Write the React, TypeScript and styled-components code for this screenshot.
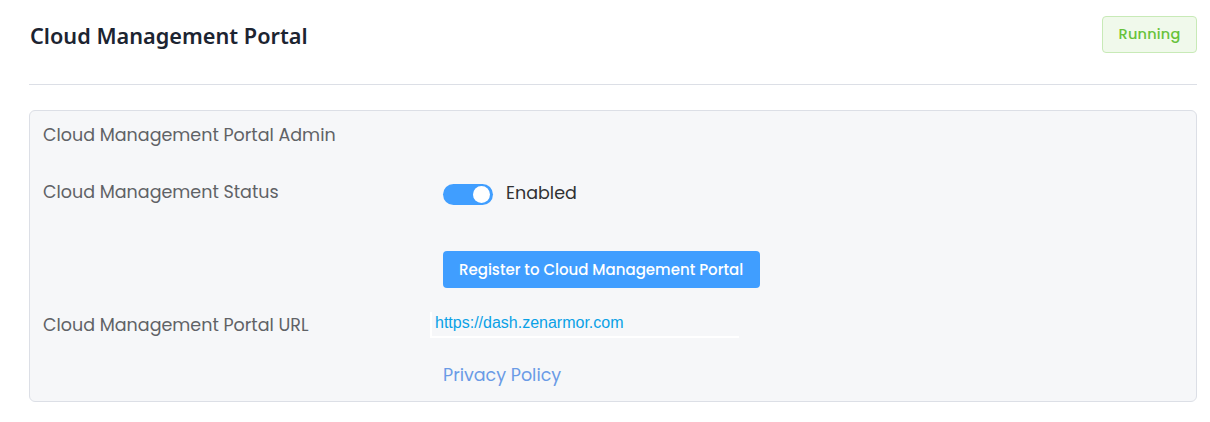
import React from 'react';
import styled, { createGlobalStyle } from 'styled-components';

const GlobalStyle = createGlobalStyle`
  html, body {
    margin: 0;
    padding: 0;
    background: #ffffff;
  }
  * {
    box-sizing: border-box;
  }
`;

const bodyFont = `'Poppins', 'Open Sans', 'Noto Sans', sans-serif`;

const Page = styled.div`
  padding: 0 13px 0 29px;
  font-family: ${bodyFont};
`;

const Header = styled.div`
  display: flex;
  align-items: center;
  justify-content: space-between;
  height: 85px;
  padding: 16px 0 31px 1px;
  border-bottom: 1px solid #dcdfe6;
`;

const Title = styled.h1`
  margin: 2px 0 0;
  font-family: 'Noto Sans', sans-serif;
  font-size: 21.7px;
  font-weight: 600;
  color: #1c2431;
  line-height: 28px;
`;

const StatusTag = styled.span`
  display: inline-flex;
  align-items: center;
  justify-content: center;
  width: 95px;
  height: 37px;
  border: 1px solid #c8eab7;
  border-radius: 4px;
  background: #f0f9eb;
  color: #67c23a;
  font-size: 14.5px;
  font-weight: 500;
  letter-spacing: 0.2px;
`;

const Card = styled.section`
  margin-top: 25px;
  border: 1px solid #dcdfe6;
  border-radius: 6px;
  background: #f6f7f9;
  padding: 12px 13px 14px;
`;

const CardTitle = styled.div`
  font-size: 17.5px;
  line-height: 24px;
  color: #606266;
`;

const FormRow = styled.div<{ $gap: number; $align?: string }>`
  display: grid;
  grid-template-columns: 400px 1fr;
  align-items: ${({ $align }) => $align ?? 'center'};
  margin-top: ${({ $gap }) => $gap}px;
`;

const Label = styled.div`
  font-size: 17.5px;
  color: #606266;
  line-height: 22px;
`;

const Value = styled.div<{ $align?: string }>`
  display: flex;
  align-items: ${({ $align }) => $align ?? 'center'};
`;

const Switch = styled.span<{ $on: boolean }>`
  position: relative;
  display: inline-block;
  flex: none;
  width: 50px;
  height: 21px;
  margin-top: 3px;
  border-radius: 11px;
  background: ${({ $on }) => ($on ? '#409eff' : '#dcdfe6')};
  &::after {
    content: '';
    position: absolute;
    top: 2px;
    left: ${({ $on }) => ($on ? '30px' : '2px')};
    width: 17px;
    height: 17px;
    border-radius: 50%;
    background: #ffffff;
  }
`;

const SwitchText = styled.span`
  margin-left: 13px;
  font-size: 17.5px;
  line-height: 22px;
  color: #303133;
  padding-top: 1px;
`;

const PrimaryButton = styled.button`
  height: 37px;
  padding: 0 17px 0 16px;
  border: none;
  border-radius: 4px;
  background: #409eff;
  color: #ffffff;
  font-family: ${bodyFont};
  font-size: 15px;
  font-weight: 500;
  cursor: pointer;
`;

const UrlInput = styled.input`
  margin-left: -13px;
  width: 309px;
  height: 26px;
  padding: 0 0 2px 3px;
  border: none;
  border-left: 2px solid #ffffff;
  border-bottom: 2px solid #ffffff;
  background: transparent;
  font-family: 'Liberation Sans', Arial, sans-serif;
  font-size: 16px;
  color: #0aa1e6;
  outline: none;
`;

const PolicyLink = styled.a`
  font-size: 17.5px;
  line-height: 24px;
  color: #6a9be6;
  text-decoration: none;
`;

export default function App() {
  return (
    <>
      <GlobalStyle />
      <Page>
        <Header>
          <Title>Cloud Management Portal</Title>
          <StatusTag>Running</StatusTag>
        </Header>
        <Card>
          <CardTitle>Cloud Management Portal Admin</CardTitle>
          <FormRow $gap={34} $align="start">
            <Label>Cloud Management Status</Label>
            <Value $align="flex-start">
              <Switch $on />
              <SwitchText>Enabled</SwitchText>
            </Value>
          </FormRow>
          <FormRow $gap={46}>
            <span />
            <Value>
              <PrimaryButton>Register to Cloud Management Portal</PrimaryButton>
            </Value>
          </FormRow>
          <FormRow $gap={24}>
            <Label>Cloud Management Portal URL</Label>
            <Value>
              <UrlInput readOnly value="https://dash.zenarmor.com" />
            </Value>
          </FormRow>
          <FormRow $gap={25}>
            <span />
            <Value>
              <PolicyLink href="#">Privacy Policy</PolicyLink>
            </Value>
          </FormRow>
        </Card>
      </Page>
    </>
  );
}
